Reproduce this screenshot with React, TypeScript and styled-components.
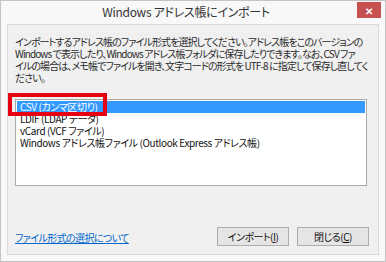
import React from "react";
import styled, { createGlobalStyle } from "styled-components";

const Global = createGlobalStyle`
  html, body { margin: 0; padding: 0; background: #fff; overflow: hidden; }
  body { font-family: "Noto Sans CJK JP", "Noto Sans", sans-serif; }
`;

const jp = `"Noto Sans CJK JP", "Noto Sans", sans-serif`;

const Window = styled.div`
  width: 386px;
  height: 262px;
  box-sizing: border-box;
  border: 1px solid #c4c4c4;
  background: #f8f8f8;
  display: flex;
  flex-direction: column;
  padding: 0 6px 6px 6px;
  font-family: ${jp};
  font-feature-settings: "palt";
  overflow: hidden;
`;

const TitleBar = styled.div`
  height: 23px;
  display: flex;
  align-items: center;
  justify-content: center;
  position: relative;
  padding-right: 14px;
`;

const Title = styled.div`
  font-size: 12px;
  letter-spacing: -0.3px;
  color: #333;
  margin-top: -2px;
`;

const CloseBtn = styled.div`
  position: absolute;
  right: -2px;
  top: 1px;
  width: 24px;
  height: 16px;
  background: #c75050;
  color: #fff;
  font-size: 10px;
  font-weight: bold;
  display: flex;
  align-items: center;
  justify-content: center;
`;

const Client = styled.div`
  flex: 1;
  min-width: 0;
  background: #f0f0f0;
  border: 1px solid #dadada;
  padding: 11px 4px 8px 7px;
  display: flex;
  flex-direction: column;
  overflow: hidden;
`;

const Desc = styled.div`
  font-size: 10px;
  letter-spacing: -0.9px;
  line-height: 12px;
  color: #2a2a2a;
  white-space: nowrap;
`;

const ListWrap = styled.div`
  position: relative;
  margin-top: 15px;
  margin-right: 7px;
`;

const ListBox = styled.div`
  height: 87px;
  box-sizing: border-box;
  background: #fff;
  border: 1px solid #ababab;
  padding: 1px;
  display: flex;
  flex-direction: column;
`;

const Item = styled.div<{ $selected?: boolean }>`
  height: 12px;
  line-height: 12px;
  font-size: 10px;
  letter-spacing: -0.4px;
  padding-left: 3px;
  color: ${(p) => (p.$selected ? "#fff" : "#111")};
  background: ${(p) => (p.$selected ? "#3399ff" : "transparent")};
  white-space: nowrap;
`;

const Mark = styled.div`
  position: absolute;
  left: -7px;
  top: -6px;
  width: 99px;
  height: 23px;
  box-sizing: border-box;
  border: 4px solid #e60012;
`;

const Footer = styled.div`
  margin-top: auto;
  display: flex;
  align-items: center;
  margin-right: 5px;
`;

const HelpLink = styled.a`
  font-size: 10px;
  letter-spacing: -0.6px;
  color: #0066cc;
  text-decoration: underline;
  margin-right: auto;
  margin-top: 2px;
`;

const Button = styled.button`
  width: 72px;
  height: 19px;
  box-sizing: border-box;
  border: 1px solid #adadad;
  background: #e5e5e5;
  font-family: ${jp};
  font-feature-settings: "palt";
  font-size: 10px;
  letter-spacing: -0.5px;
  color: #111;
  padding: 0;
  margin-left: 8px;
  u { text-decoration: underline; }
`;

export default function App() {
  return (
    <>
      <Global />
      <Window>
        <TitleBar>
          <Title>Windows アドレス帳にインポート</Title>
          <CloseBtn>✕</CloseBtn>
        </TitleBar>
        <Client>
          <Desc>
            インポートするアドレス帳のファイル形式を選択してください。アドレス帳をこのバージョンの
            <br />
            Windows で表示したり、Windows アドレス帳フォルダに保存したりできます。なお、CSV ファ
            <br />
            イルの場合は、メモ帳でファイルを開き、文字コードの形式を UTF-8 に指定して保存し直してく
            <br />
            ださい。
          </Desc>
          <ListWrap>
            <ListBox>
              <Item $selected>CSV (カンマ区切り)</Item>
              <Item>LDIF (LDAP データ)</Item>
              <Item>vCard (VCF ファイル)</Item>
              <Item>Windows アドレス帳ファイル (Outlook Express アドレス帳)</Item>
            </ListBox>
            <Mark />
          </ListWrap>
          <Footer>
            <HelpLink href="#">ファイル形式の選択について</HelpLink>
            <Button>
              インポート(<u>I</u>)
            </Button>
            <Button>
              閉じる(<u>C</u>)
            </Button>
          </Footer>
        </Client>
      </Window>
    </>
  );
}
